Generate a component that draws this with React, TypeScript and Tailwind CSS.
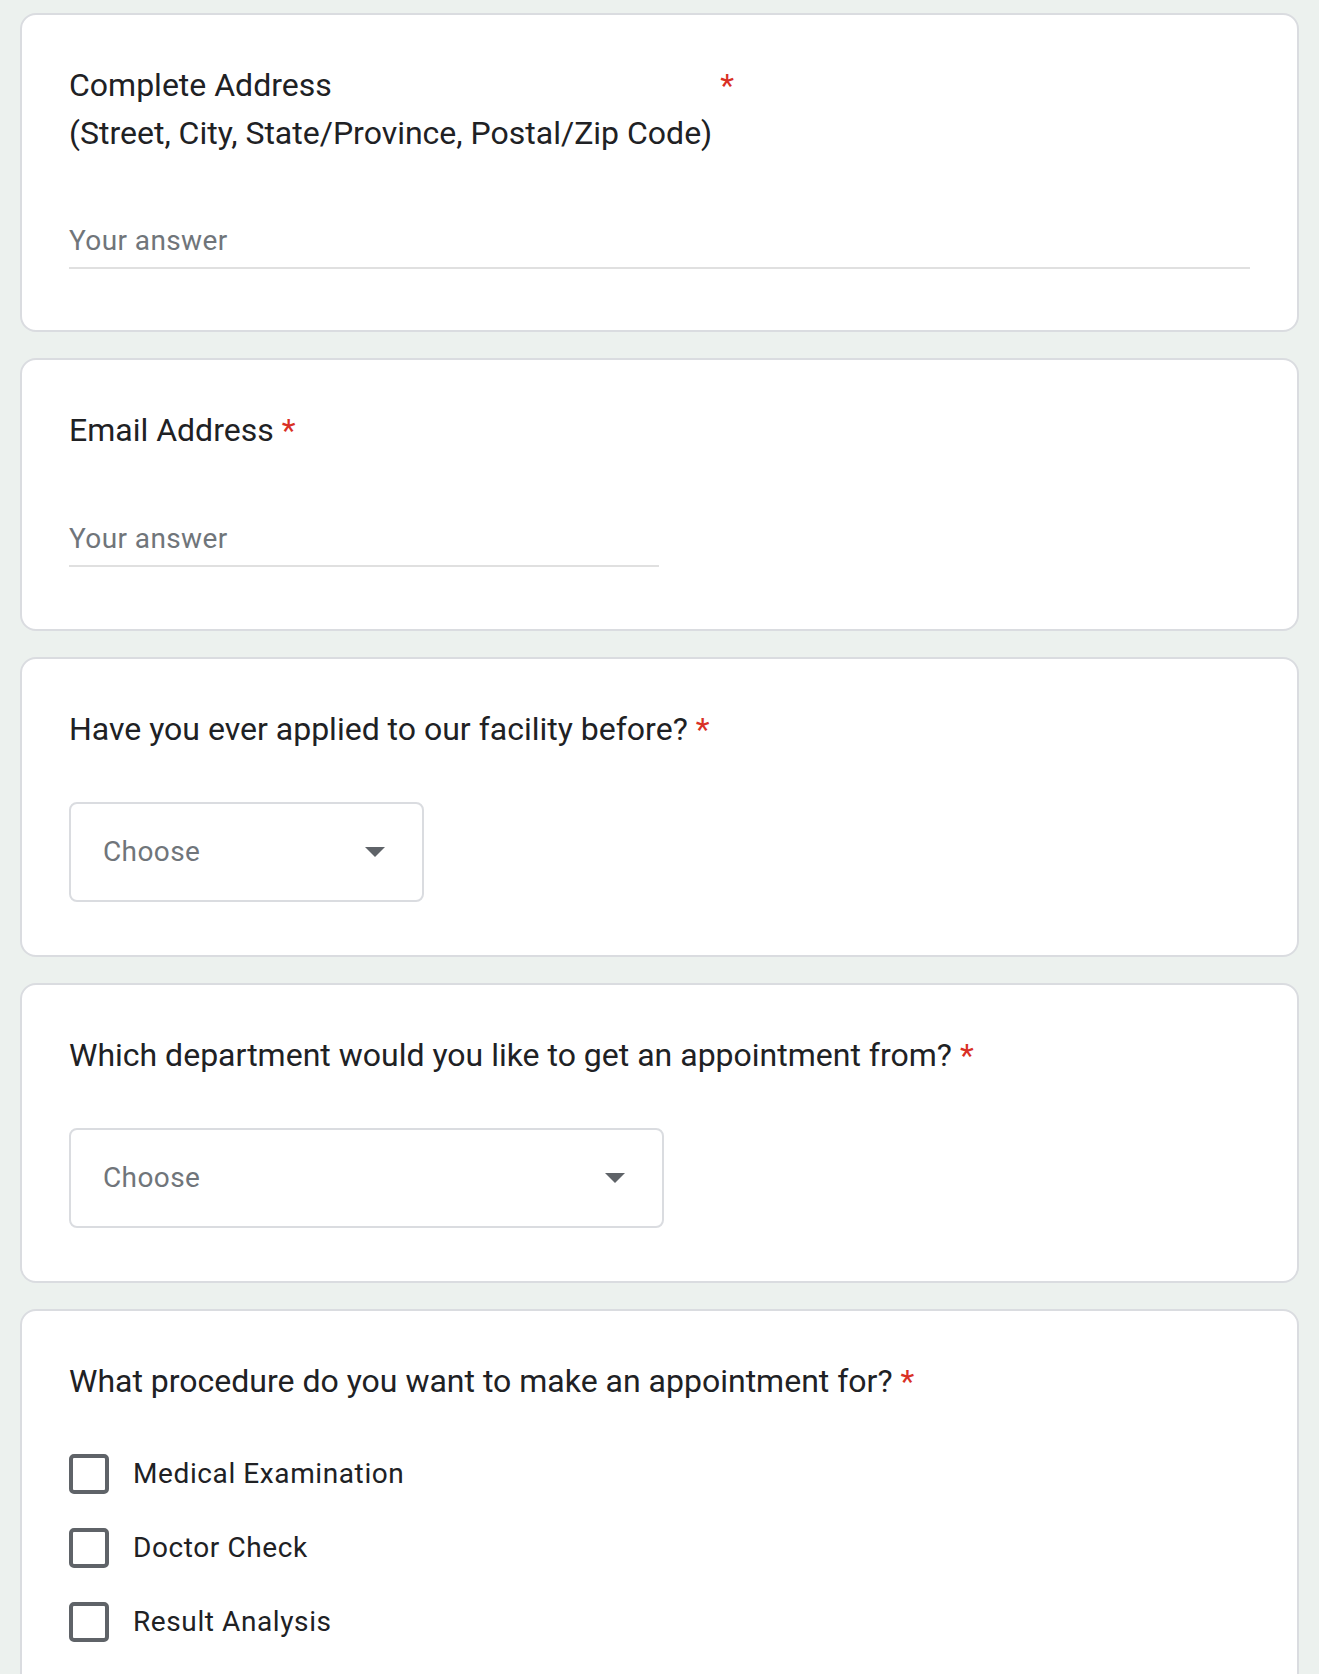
import React from "react";

const Star = () => <span className="pl-2 text-[#d93025]">*</span>;

const Card = ({ children, last }: { children: React.ReactNode; last?: boolean }) => (
  <div
    className={
      "rounded-[16px] border-2 border-[#dadce0] bg-white px-[47px] pt-[46px] " +
      (last ? "pb-[60px]" : "mb-[26px]")
    }
  >
    {children}
  </div>
);

const Title = ({ text }: { text: string }) => (
  <div className="flex items-start text-[32px] leading-[48px] text-[#202124]">
    <div className="whitespace-pre-line">{text}</div>
    <Star />
  </div>
);

const TextAnswer = ({ full, gap }: { full?: boolean; gap: string }) => (
  <div className={"border-b-2 border-[#e0e0e0] pb-[6px] " + gap + " " + (full ? "w-full" : "w-[590px]")}>
    <div className="text-[28px] leading-[40px] tracking-[0.4px] text-[#70757a]">Your answer</div>
  </div>
);

const Dropdown = ({ width }: { width: string }) => (
  <div
    className={
      "mt-[49px] flex h-[100px] items-center justify-between rounded-[8px] border-2 border-[#dadce0] pl-[32px] pr-[37px] " +
      width
    }
  >
    <span className="text-[28px] tracking-[0.4px] text-[#70757a]">Choose</span>
    <svg width="20" height="10" viewBox="0 0 20 10">
      <polygon points="0,0 20,0 10,10" fill="#5f6368" />
    </svg>
  </div>
);

const options = ["Medical Examination", "Doctor Check", "Result Analysis"];

export default function App() {
  return (
    <div
      className="h-[1674px] overflow-hidden bg-[#ecf1ee] px-[20px] pt-[13px]"
      style={{ fontFamily: "Roboto, 'Liberation Sans', sans-serif" }}
    >
      <Card>
        <Title text={"Complete Address\n(Street, City, State/Province, Postal/Zip Code)"} />
        <TextAnswer full gap="mt-[64px]" />
        <div className="h-[61px]" />
      </Card>

      <Card>
        <Title text="Email Address" />
        <TextAnswer gap="mt-[65px]" />
        <div className="h-[62px]" />
      </Card>

      <Card>
        <Title text="Have you ever applied to our facility before?" />
        <Dropdown width="w-[355px]" />
        <div className="h-[53px]" />
      </Card>

      <Card>
        <Title text="Which department would you like to get an appointment from?" />
        <Dropdown width="w-[595px]" />
        <div className="h-[53px]" />
      </Card>

      <Card last>
        <Title text="What procedure do you want to make an appointment for?" />
        <div className="mt-[32px] flex flex-col">
          {options.map((o) => (
            <div key={o} className="flex h-[74px] items-center gap-[24px]">
              <div className="h-[40px] w-[40px] rounded-[5px] border-[4px] border-[#5f6368]" />
              <span className="text-[28px] tracking-[0.6px] text-[#202124]">{o}</span>
            </div>
          ))}
        </div>
      </Card>
    </div>
  );
}
